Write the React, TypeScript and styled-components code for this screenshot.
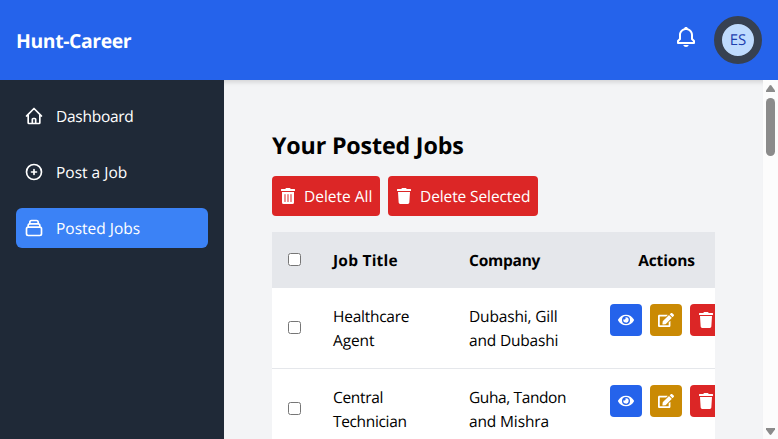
import React from "react";
import styled, { createGlobalStyle } from "styled-components";
import { HiOutlineCollection, HiOutlineHome, HiOutlinePlusCircle } from "react-icons/hi";
import { BiBell } from "react-icons/bi";
import { FaEdit, FaEye, FaTrash, FaTrashAlt } from "react-icons/fa";

const GlobalStyle = createGlobalStyle`
  *, *::before, *::after { box-sizing: border-box; }
  body {
    margin: 0;
    overflow: hidden;
    font-family: "Open Sans", "Noto Sans", sans-serif;
    font-size: 15.5px;
    line-height: 24px;
    color: #000;
    text-rendering: geometricPrecision;
  }
  svg { display: block; flex: none; }
`;

const Page = styled.div`
  display: flex;
  flex-direction: column;
  height: 100vh;
  overflow: hidden;
`;

const Header = styled.header`
  display: flex;
  flex: none;
  align-items: center;
  justify-content: space-between;
  height: 80px;
  padding: 0 16px;
  color: #fff;
  background: #2563eb;
`;

const Fit = styled.span<{ $spacing?: number }>`
  letter-spacing: ${(p) => p.$spacing ?? 0}px;
  white-space: nowrap;
`;

const Brand = styled.div`
  padding-top: 2px;
  font-size: 19.4px;
  font-weight: 700;
  line-height: 28px;
`;

const HeaderTools = styled.div`
  display: flex;
  align-items: center;
  gap: 16px;
`;

const BellButton = styled.div`
  padding-bottom: 6px;
`;

const Avatar = styled.div`
  display: flex;
  align-items: center;
  justify-content: center;
  width: 48px;
  height: 48px;
  border: 8px solid #374151;
  border-radius: 50%;
  color: #1e40af;
  background: #bfdbfe;
  font-size: 15px;
`;

const Body = styled.div`
  display: flex;
  flex: 1;
  min-height: 0;
`;

const Sidebar = styled.nav`
  display: flex;
  flex: none;
  flex-direction: column;
  gap: 16px;
  width: 224px;
  padding: 16px;
  background: #1f2937;
`;

const NavItem = styled.a<{ $active?: boolean }>`
  display: flex;
  align-items: center;
  gap: 12px;
  height: 40px;
  padding: 0 8px;
  border-radius: 6px;
  color: #fff;
  background: ${(p) => (p.$active ? "#3b82f6" : "transparent")};
`;

const Main = styled.main`
  flex: 1;
  min-width: 0;
  padding: 48px;
  overflow: hidden;
  background: #f3f4f6;
  box-shadow: inset 0 6px 5px -4px rgba(0, 0, 0, 0.14);
`;

const Title = styled.h1`
  margin: 0 0 14px;
  font-size: 23.25px;
  font-weight: 700;
  line-height: 34px;
`;

const ButtonRow = styled.div`
  display: flex;
  gap: 8px;
  margin-bottom: 16px;
`;

const DangerButton = styled.div<{ $width: number }>`
  display: flex;
  align-items: center;
  gap: 8px;
  width: ${(p) => p.$width}px;
  height: 40px;
  padding: 0 8px;
  border-radius: 4px;
  color: #fff;
  background: #dc2626;
`;

const TableClip = styled.div`
  overflow: hidden;
`;

const Row = styled.div<{ $head?: boolean }>`
  display: grid;
  grid-template-columns: 45px 136px 141px 145px;
  width: 467px;
  height: ${(p) => (p.$head ? 56 : 81)}px;
  border-bottom: ${(p) => (p.$head ? "none" : "1px solid #e5e7eb")};
  font-weight: ${(p) => (p.$head ? 700 : 400)};
  background: ${(p) => (p.$head ? "#e5e7eb" : "#fff")};
`;

const Cell = styled.div<{ $center?: boolean }>`
  display: flex;
  flex-direction: column;
  align-items: ${(p) => (p.$center ? "center" : "flex-start")};
  padding: 16px;
`;

const CheckCell = styled.div`
  display: flex;
  align-items: center;
  padding: 0 16px 2px;
`;

const Check = styled.input`
  width: 13px;
  height: 13px;
  margin: 0;
`;

const Actions = styled.div`
  display: flex;
  gap: 8px;
  padding: 16px;
`;

const tones = { view: "#2563eb", edit: "#ca8a04", remove: "#dc2626" };

const ActionButton = styled.div<{ $tone: keyof typeof tones }>`
  display: flex;
  align-items: center;
  justify-content: center;
  flex: none;
  width: 32px;
  height: 32px;
  border-radius: 4px;
  color: #fff;
  background: ${(p) => tones[p.$tone]};
`;

const ScrollTrack = styled.div`
  display: flex;
  flex: none;
  flex-direction: column;
  align-items: center;
  width: 15px;
  padding: 5px 0 4px;
  background: #fcfcfc;
`;

const ScrollThumb = styled.div`
  width: 9px;
  height: 58px;
  margin: 6px 0 auto;
  border-radius: 5px;
  background: #8b8b8b;
`;

const Arrow = ({ down = false }: { down?: boolean }) => (
  <svg width="9" height="7" viewBox="0 0 9 7" fill="#8b8b8b">
    <path d={down ? "M0 0h9v1.4L5.3 6.5q-.8.8-1.6 0L0 1.4z" : "M0 7h9V5.6L5.3.5q-.8-.8-1.6 0L0 5.6z"} />
  </svg>
);

type Line = [string, number];
const jobs: { title: Line[]; company: Line[] }[] = [
  {
    title: [["Healthcare", -0.25], ["Agent", -0.1]],
    company: [["Dubashi, Gill", -0.16], ["and Dubashi", -0.18]],
  },
  {
    title: [["Central", -0.33], ["Technician", -0.35]],
    company: [["Guha, Tandon", -0.4], ["and Mishra", -0.14]],
  },
];

const Lines = ({ lines }: { lines: Line[] }) => (
  <Cell>
    {lines.map(([text, spacing]) => (
      <Fit key={text} $spacing={spacing}>{text}</Fit>
    ))}
  </Cell>
);

export default function App() {
  return (
    <Page>
      <GlobalStyle />
      <Header>
        <Brand><Fit $spacing={-0.39}>Hunt-Career</Fit></Brand>
        <HeaderTools>
          <BellButton><BiBell size={24} /></BellButton>
          <Avatar><Fit>ES</Fit></Avatar>
        </HeaderTools>
      </Header>
      <Body>
        <Sidebar>
          <NavItem><HiOutlineHome size={20} /><Fit $spacing={-0.27}>Dashboard</Fit></NavItem>
          <NavItem><HiOutlinePlusCircle size={20} /><Fit>Post a Job</Fit></NavItem>
          <NavItem $active><HiOutlineCollection size={20} /><Fit>Posted Jobs</Fit></NavItem>
        </Sidebar>
        <Main>
          <Title><Fit $spacing={-0.17}>Your Posted Jobs</Fit></Title>
          <ButtonRow>
            <DangerButton $width={108}><FaTrashAlt size={16} /><Fit>Delete All</Fit></DangerButton>
            <DangerButton $width={150}><FaTrash size={16} /><Fit $spacing={-0.1}>Delete Selected</Fit></DangerButton>
          </ButtonRow>
          <TableClip>
            <Row $head>
              <CheckCell><Check type="checkbox" /></CheckCell>
              <Cell><Fit $spacing={0.22}>Job Title</Fit></Cell>
              <Cell><Fit $spacing={-0.24}>Company</Fit></Cell>
              <Cell $center><Fit $spacing={-0.15}>Actions</Fit></Cell>
            </Row>
            {jobs.map((job) => (
              <Row key={job.title[0][0]}>
                <CheckCell><Check type="checkbox" /></CheckCell>
                <Lines lines={job.title} />
                <Lines lines={job.company} />
                <Actions>
                  <ActionButton $tone="view"><FaEye size={16} /></ActionButton>
                  <ActionButton $tone="edit"><FaEdit size={16} /></ActionButton>
                  <ActionButton $tone="remove"><FaTrash size={16} /></ActionButton>
                </Actions>
              </Row>
            ))}
          </TableClip>
        </Main>
        <ScrollTrack>
          <Arrow />
          <ScrollThumb />
          <Arrow down />
        </ScrollTrack>
      </Body>
    </Page>
  );
}
